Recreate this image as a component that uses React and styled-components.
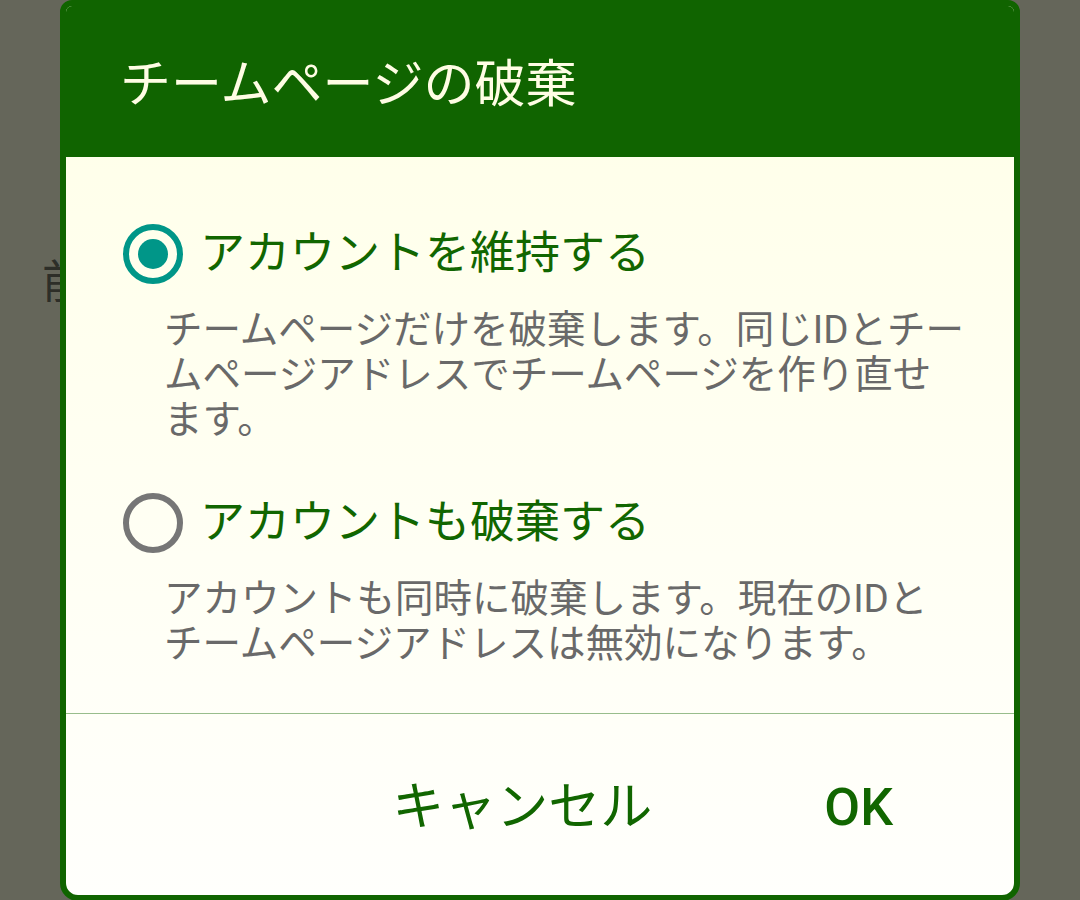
import React, { useState } from 'react';
import styled, { createGlobalStyle } from 'styled-components';

const GlobalStyle = createGlobalStyle`
  html, body {
    margin: 0;
    padding: 0;
  }
  body {
    font-family: Roboto, "Noto Sans CJK JP", "Noto Sans", sans-serif;
  }
`;

const Screen = styled.div`
  position: relative;
  width: 1080px;
  height: 900px;
  overflow: hidden;
  background: #65665a;
`;

const BehindText = styled.p`
  margin: 0;
  padding: 252px 0 0 42px;
  font-size: 46px;
  line-height: 60px;
  color: #2d2e28;
  white-space: nowrap;
`;

const Dialog = styled.div`
  position: absolute;
  left: 60px;
  top: 0;
  width: 960px;
  height: 901px;
  box-sizing: border-box;
  display: flex;
  flex-direction: column;
  border: 6px solid #106400;
  border-radius: 12px 12px 18px 18px;
  overflow: hidden;
  background: linear-gradient(#ffffe7, #fffffc);
`;

const Header = styled.header`
  display: flex;
  align-items: center;
  height: 147px;
  margin: -6px -6px 0;
  padding: 6px 0 4px 60px;
  background: #106400;
`;

const Title = styled.h1`
  margin: 0;
  font-size: 51px;
  font-weight: 400;
  color: #fffde4;
`;

const Body = styled.div`
  display: flex;
  flex-direction: column;
  padding: 67px 40px 47px 57px;
  border-bottom: 1px solid #98bd8c;
`;

const Option = styled.label`
  display: flex;
  flex-direction: column;
  cursor: pointer;

  & + & {
    margin-top: 51px;
  }
`;

const OptionRow = styled.div`
  display: flex;
  align-items: center;
  gap: 17px;
  height: 60px;
`;

const Radio = styled.span`
  flex: none;
  position: relative;
  width: 60px;
  height: 60px;
  box-sizing: border-box;
  border-radius: 50%;
  border: 6px solid ${({ $checked }) => ($checked ? '#009688' : '#767676')};

  &::after {
    content: '';
    position: absolute;
    left: 9px;
    top: 9px;
    width: 30px;
    height: 30px;
    border-radius: 50%;
    background: #009688;
    display: ${({ $checked }) => ($checked ? 'block' : 'none')};
  }
`;

const OptionLabel = styled.span`
  font-size: 45px;
  line-height: 60px;
  color: #116600;
`;

const Description = styled.p`
  margin: 23px 0 0 41px;
  font-size: 38.5px;
  line-height: 45px;
  color: #696969;
`;

const Footer = styled.footer`
  flex: 1;
  display: flex;
  align-items: center;
  justify-content: flex-end;
  gap: 172px;
  padding: 6px 121px 0 0;
`;

const TextButton = styled.button`
  padding: 0;
  border: none;
  background: none;
  font-family: Roboto, "Noto Sans CJK JP", sans-serif;
  font-size: 52px;
  font-weight: ${({ $strong }) => ($strong ? 500 : 400)};
  line-height: 60px;
  color: #116600;
  cursor: pointer;
`;

const options = [
  {
    id: 'keep',
    label: 'アカウントを維持する',
    lines: [
      'チームページだけを破棄します。同じIDとチー',
      'ムページアドレスでチームページを作り直せ',
      'ます。',
    ],
  },
  {
    id: 'delete',
    label: 'アカウントも破棄する',
    lines: [
      'アカウントも同時に破棄します。現在のIDと',
      'チームページアドレスは無効になります。',
    ],
  },
];

export default function App() {
  const [choice, setChoice] = useState('keep');

  return (
    <>
      <GlobalStyle />
      <Screen>
        <BehindText>前回のチームページ</BehindText>
        <Dialog role="dialog" aria-label="チームページの破棄">
          <Header>
            <Title>チームページの破棄</Title>
          </Header>
          <Body>
            {options.map((opt) => (
              <Option key={opt.id} onClick={() => setChoice(opt.id)}>
                <OptionRow>
                  <Radio $checked={choice === opt.id} />
                  <OptionLabel>{opt.label}</OptionLabel>
                </OptionRow>
                <Description>
                  {opt.lines.map((line, i) => (
                    <React.Fragment key={i}>
                      {line}
                      {i < opt.lines.length - 1 && <br />}
                    </React.Fragment>
                  ))}
                </Description>
              </Option>
            ))}
          </Body>
          <Footer>
            <TextButton>キャンセル</TextButton>
            <TextButton $strong>OK</TextButton>
          </Footer>
        </Dialog>
      </Screen>
    </>
  );
}
